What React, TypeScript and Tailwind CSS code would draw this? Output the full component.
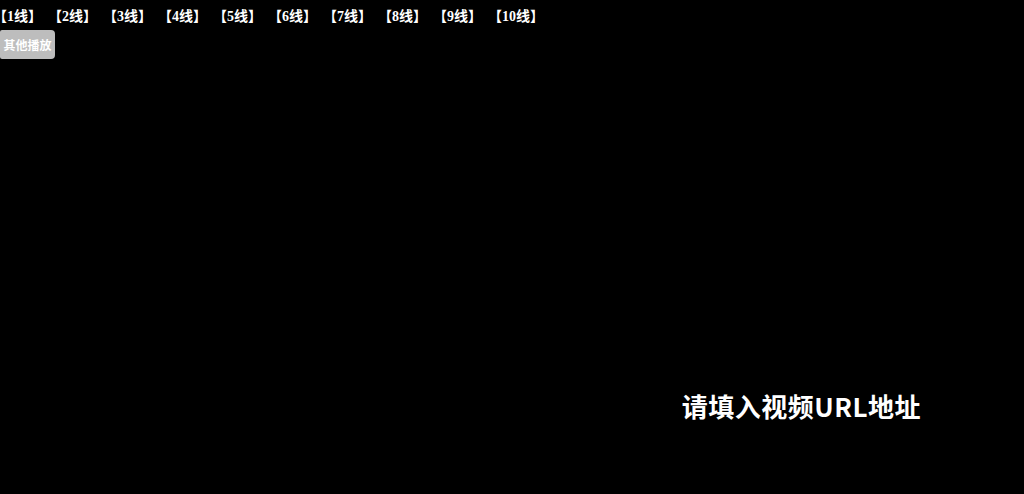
const lines = ["1线", "2线", "3线", "4线", "5线", "6线", "7线", "8线", "9线", "10线"];

export default function App() {
  return (
    <div className="flex h-[494px] w-full flex-col overflow-hidden bg-black text-white">
      {/* Line selector */}
      <div className="flex h-[30px] items-center gap-[20px] pl-0 pt-[3px]">
        {lines.map((line) => (
          <a
            key={line}
            href="#"
            className="whitespace-nowrap text-[14px] font-bold leading-none text-white [font-family:'Liberation_Serif','Noto_Sans_CJK_SC',serif] [font-feature-settings:'halt']"
          >
            【{line}】
          </a>
        ))}
      </div>

      {/* Other player button */}
      <div className="flex">
        <button className="h-[29px] w-[55px] rounded-r-[4px] rounded-l-[2px] bg-[#bdbdbd] text-[12px] font-bold text-white [font-family:'Noto_Sans_CJK_SC',sans-serif]">
          其他播放
        </button>
      </div>

      {/* Player area */}
      <div className="flex flex-1 items-end justify-end pb-[75px] pr-[103px]">
        <span className="text-[26px] font-bold leading-none tracking-[0.5px] text-white [font-family:'Noto_Sans_CJK_SC',sans-serif]">
          请填入视频URL地址
        </span>
      </div>
    </div>
  );
}
